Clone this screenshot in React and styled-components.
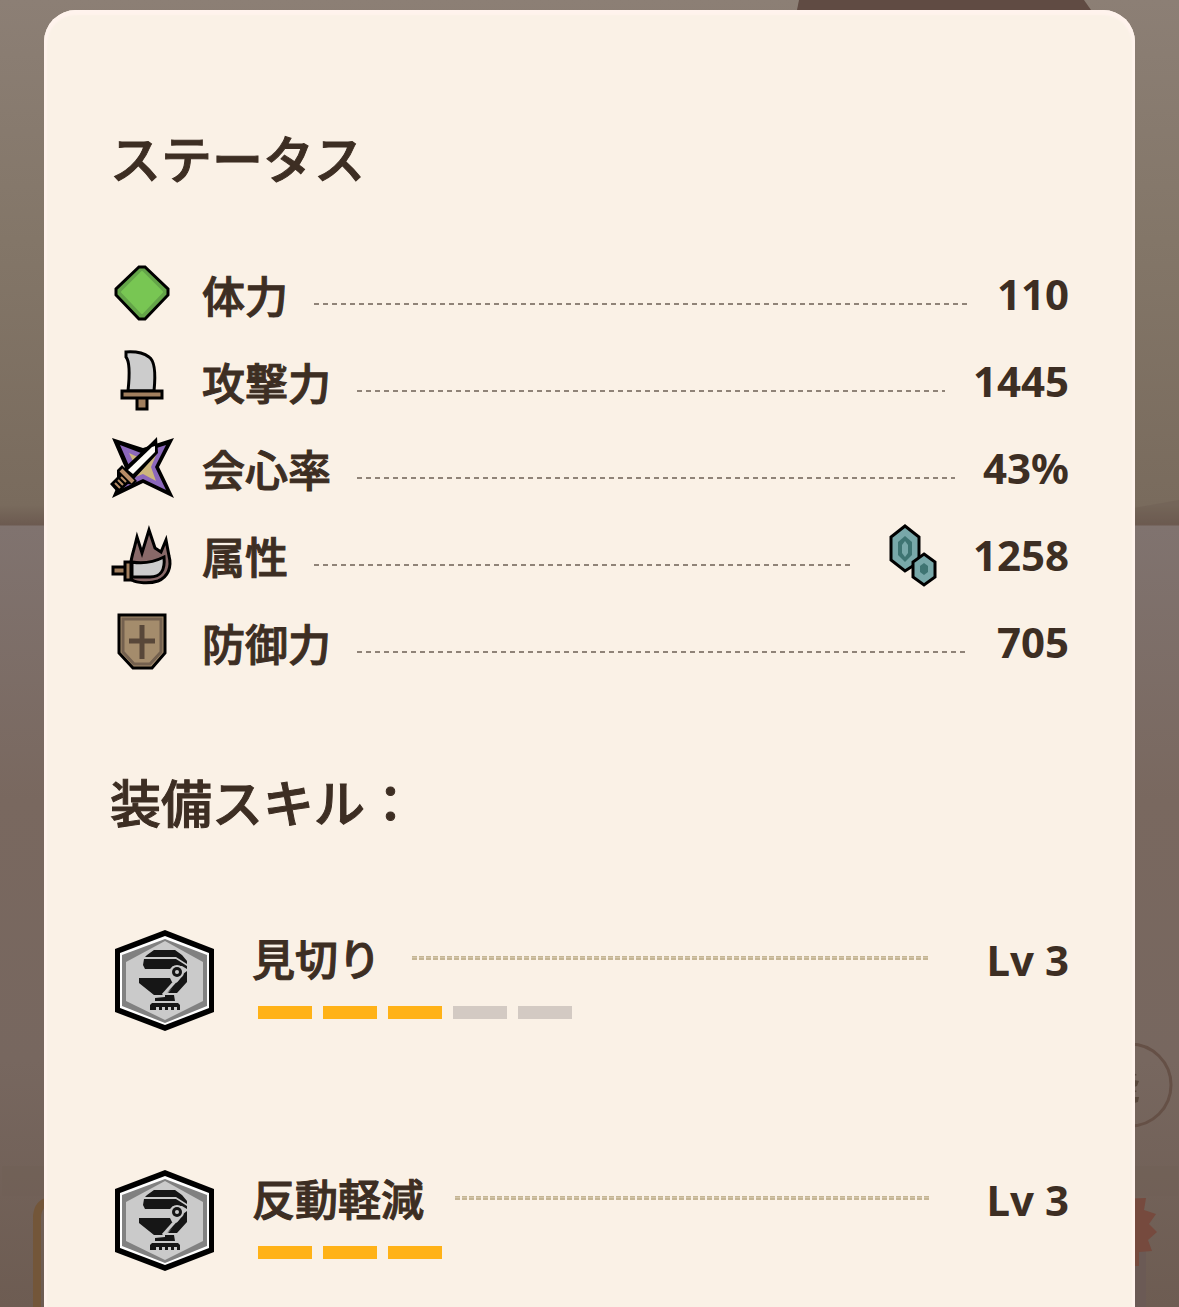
import React from 'react';
import styled, { createGlobalStyle } from 'styled-components';

const GlobalStyle = createGlobalStyle`
    * {
        box-sizing: border-box;
    }

    body {
        margin: 0;
        background-color: #75665d;
        color: #3d2e23;
        font-family: "Noto Sans", "Noto Sans CJK JP", sans-serif;
    }
`;

const Page = styled.div`
    position: relative;
    min-height: 100vh;
    padding: 10px 44px 0;
    display: flex;
    overflow: hidden;
    background: linear-gradient(#8c7f75 0, #837668 240px, #796b5d 505px, #6c5a50 525px, #80736f 526px, #79685f 800px, #77675f 1060px, #6d5c52 1307px);
`;

const Scenery = styled.svg`
    position: absolute;
    top: 0;
    ${(props) => props.$side}: 0;
    height: 1307px;
    width: ${(props) => props.$width}px;
`;

const Sheet = styled.main`
    position: relative;
    flex: 1;
    min-width: 0;
    padding: 111px 66px 32px;
    border-radius: 32px 32px 0 0;
    background-color: #faf1e6;
    box-shadow: inset 0 2px 2px 3px #fff3ed;
`;

const Title = styled.h2`
    margin: 0;
    font-family: "Noto Sans CJK JP", sans-serif;
    font-size: 51px;
    line-height: 72px;
    font-weight: 500;
    -webkit-text-stroke: 1px currentColor;
`;

const StatList = styled.ul`
    list-style: none;
    margin: 57px 0 80px;
    padding: 0;
`;

const StatRow = styled.li`
    display: flex;
    align-items: center;
    height: 87px;
    font-size: 42px;
    line-height: 60px;
    font-weight: 700;
`;

const Label = styled.span`
    font-family: "Noto Sans CJK JP", sans-serif;
    font-size: 43px;
    font-weight: 500;
    -webkit-text-stroke: 1px currentColor;
`;

const StatIcon = styled.svg`
    flex: none;
    width: 64px;
    height: 64px;
    margin-right: 28px;
`;

const StatLeader = styled.span`
    flex: 1;
    height: 2px;
    margin: 20px 28px 0 26px;
    background: repeating-linear-gradient(90deg, #8f8378 0 5px, transparent 5px 9px);
`;

const ElementIcon = styled.svg`
    flex: none;
    width: 48px;
    height: 64px;
    margin: 0 36px 0 8px;
`;

const SkillList = styled.ul`
    list-style: none;
    margin: 90px 0 0;
    padding: 0;
    display: grid;
    gap: 128px;
`;

const SkillRow = styled.li`
    display: flex;
    gap: 34px;
    height: 112px;
`;

const SkillIcon = styled.svg`
    flex: none;
    width: 108px;
    height: 108px;
`;

const SkillBody = styled.div`
    flex: 1;
`;

const SkillHead = styled.div`
    display: flex;
    align-items: baseline;
    font-size: 42px;
    line-height: 60px;
    font-weight: 700;
`;

const SkillLeader = styled.span`
    flex: 1;
    align-self: center;
    height: 4px;
    margin: 0 58px 2px 31px;
    background:
        repeating-linear-gradient(90deg, transparent 0 5px, #faf1e6 5px 7px),
        linear-gradient(#c5b594 1px, #d3c6ab 1px 2px, #c5b594 2px);
`;

const Bars = styled.div`
    display: flex;
    gap: 11px;
    padding: 16px 0 0 6px;
`;

const Bar = styled.span`
    width: 54px;
    height: 13px;
    background-color: ${(props) => (props.$filled ? '#ffb217' : '#d3cac3')};
`;

const HealthIcon = () => (
    <StatIcon viewBox="0 0 64 64" aria-hidden="true">
        <path d="M29 5h6L58 27v6L35 57h-6L6 33v-6z" fill="#64a449" stroke="#000" strokeWidth="3" />
        <path d="M32 10L52 30 32 51 12 30z" fill="#78c653" stroke="#78c653" strokeWidth="2" strokeLinejoin="round" />
    </StatIcon>
);

const AttackIcon = () => (
    <StatIcon viewBox="0 0 64 64" aria-hidden="true">
        <path d="M16 3Q31 2 39 8 47 13 44 42H18Q21 14 16 8z" fill="#ccc" stroke="#000" strokeWidth="3" />
        <path d="M27 49h10v11H27zM12 42h40v7H12z" fill="#a17f5e" stroke="#000" strokeWidth="3" />
    </StatIcon>
);

const CriticalIcon = () => (
    <StatIcon viewBox="0 0 64 64" aria-hidden="true">
        <path d="M2 2L33 12 64 2 49 31 64 62 33 47 2 62 15 32z" fill="#000" />
        <path d="M10 9L31 17 56 9 45 31 56 54 33 43 11 53 20 32z" fill="#8b67bb" />
        <path d="M19 17L32 23 47 17 41 31 46 45 33 38 20 43 26 31z" fill="#cdb67b" />
        <path d="M12 34L40 8 47 1 48 17 24 43z" fill="#000" />
        <path d="M18 34L42 11 45 10v6L23 38z" fill="#fffdf7" />
        <path d="M12 29L27 45 23 49 18 48 8 57 0 48 7 41 7 34z" fill="#000" />
        <path d="M11 34L23 46" stroke="#b88d67" strokeWidth="4" />
        <path d="M5 47l5 5M8 44l5 5M11 41l5 5" stroke="#b88d67" strokeWidth="2" />
    </StatIcon>
);

const ElementStatIcon = () => (
    <StatIcon viewBox="0 0 64 64" aria-hidden="true">
        <path d="M22 57C18 48 21 36 24 26L27 14 32 30 39 7 45 25 51 29 56 17 59 33C62 44 58 54 48 58 39 61 27 60 22 57z" fill="#886968" stroke="#000" strokeWidth="3" />
        <path d="M22 39Q38 42 54 34 56 54 40 54H22z" fill="#ccc" stroke="#000" strokeWidth="3" />
        <path d="M3 44h12v7H3zM15 39h6v18h-6z" fill="#a17f5e" stroke="#000" strokeWidth="3" />
    </StatIcon>
);

const DefenseIcon = () => (
    <StatIcon viewBox="0 0 64 64" aria-hidden="true">
        <path d="M9 5h46v38L42 58H23L9 43z" fill="#a48c6c" stroke="#000" strokeWidth="3" />
        <path d="M13 9h38v33L40 54H24L13 42z" fill="none" stroke="#74614f" strokeWidth="3" />
        <path d="M32 15v34M19 31h26" stroke="#584739" strokeWidth="5" />
    </StatIcon>
);

const DragonIcon = () => (
    <ElementIcon viewBox="0 0 48 64" aria-label="龍">
        <path d="M16 3L30 14v25L16 48 2 37V14z" fill="#78a8a9" stroke="#000" strokeWidth="3" />
        <path d="M16 13l7 6v13l-7 7-7-7V19z" fill="#3e7472" />
        <path d="M16 18l3 4v8l-3 4-3-4v-8z" fill="#78a8a9" />
        <path d="M35 31l11 8v15l-11 8-11-8V39z" fill="#78a8a9" stroke="#000" strokeWidth="3" />
        <path d="M35 40l4 3v6l-4 3-4-3v-6z" fill="#3e7472" />
    </ElementIcon>
);

const ArmorSkillIcon = () => (
    <SkillIcon viewBox="0 0 108 108" aria-hidden="true">
        <path d="M55 3l49 19v63l-49 19L5 85V22z" fill="#000" />
        <path d="M55 9l44 17v55L55 98 10 81V26z" fill="#fff" />
        <path d="M55 12l42 16v51L55 96 12 79V28z" fill="#818181" />
        <path d="M55 14l38 21v39L55 93 16 74V35z" fill="#cacaca" />
        <path d="M37 28l7-5h21l7 5 5 6v3l-11-7H35zM34 32h32l11 7v3l-5-3h-9l-3 3H35l-2-4z" fill="#161616" />
        <path d="M29 51h31l2 4 7 1-15 12H44L29 56z" fill="#161616" />
        <path d="M77 44v11L67 66h-9l12-14 3-5z" fill="#161616" />
        <path d="M69 50L53 68" fill="none" stroke="#cacaca" strokeWidth="3" />
        <circle cx="67" cy="45" r="7" fill="#cacaca" />
        <circle cx="67" cy="45" r="5" fill="#161616" />
        <circle cx="67" cy="45" r="2" fill="#cacaca" />
        <path d="M55 68h9l1 6H45v-3l10-1z" fill="#161616" />
        <path d="M42 76h26l2 2v5h-3v-3h-3v3h-3v-3h-3v3h-3v-3h-3v3h-3v-3h-3v3h-6v-5z" fill="#161616" />
    </SkillIcon>
);

const stats = [
    { label: '体力', value: '110', icon: HealthIcon },
    { label: '攻撃力', value: '1445', icon: AttackIcon },
    { label: '会心率', value: '43%', icon: CriticalIcon },
    { label: '属性', value: '1258', icon: ElementStatIcon, element: true },
    { label: '防御力', value: '705', icon: DefenseIcon },
];

const skills = [
    { name: '見切り', level: 3, max: 5 },
    { name: '反動軽減', level: 3, max: 3 },
];

const App = () => (
    <Page>
        <GlobalStyle />
        <Scenery $side="left" $width={44} viewBox="0 0 44 1307" aria-hidden="true">
            <path d="M2 1166h42v30H2z" fill="#705f55" opacity=".5" />
            <path d="M37 1310V1218q0-14 12-17" fill="none" stroke="#735639" strokeWidth="8" />
        </Scenery>
        <Scenery $side="right" $width={400} viewBox="0 0 400 1307" aria-hidden="true">
            <path d="M20 0h285l7 10H18z" fill="#604b43" />
            <path d="M400 500l-45 8v16h45z" fill="#6b594e" opacity=".3" />
            <circle cx="351" cy="1085" r="41" fill="none" stroke="#655046" strokeWidth="3" />
            <path d="M355 1073l3 2-3 1zM355 1080l5 1-2 5-3 1zM355 1090l3 1-3 2zM355 1097l5 0-1 5-4 1z" fill="#57463b" />
            <path d="M356 1166h43v30h-43z" fill="#705f55" opacity=".5" />
            <path d="M355 1220h12v87h-12z" fill="#6b5a55" />
            <path d="M340 1199l27-1-2 12 12 4-7 10 8 8-9 8 4 11-13 1v14h-20z" fill="#764a3e" />
        </Scenery>
        <Sheet>
            <Title>ステータス</Title>
            <StatList>
                {stats.map(({ label, value, icon: Icon, element }) => (
                    <StatRow key={label}>
                        <Icon />
                        <Label>{label}</Label>
                        <StatLeader />
                        {element && <DragonIcon />}
                        <span>{value}</span>
                    </StatRow>
                ))}
            </StatList>
            <Title>装備スキル：</Title>
            <SkillList>
                {skills.map((skill) => (
                    <SkillRow key={skill.name}>
                        <ArmorSkillIcon />
                        <SkillBody>
                            <SkillHead>
                                <Label>{skill.name}</Label>
                                <SkillLeader />
                                <span>Lv {skill.level}</span>
                            </SkillHead>
                            <Bars>
                                {Array.from({ length: skill.max }, (_, i) => (
                                    <Bar key={i} $filled={i < skill.level} />
                                ))}
                            </Bars>
                        </SkillBody>
                    </SkillRow>
                ))}
            </SkillList>
        </Sheet>
    </Page>
);

export default App;
